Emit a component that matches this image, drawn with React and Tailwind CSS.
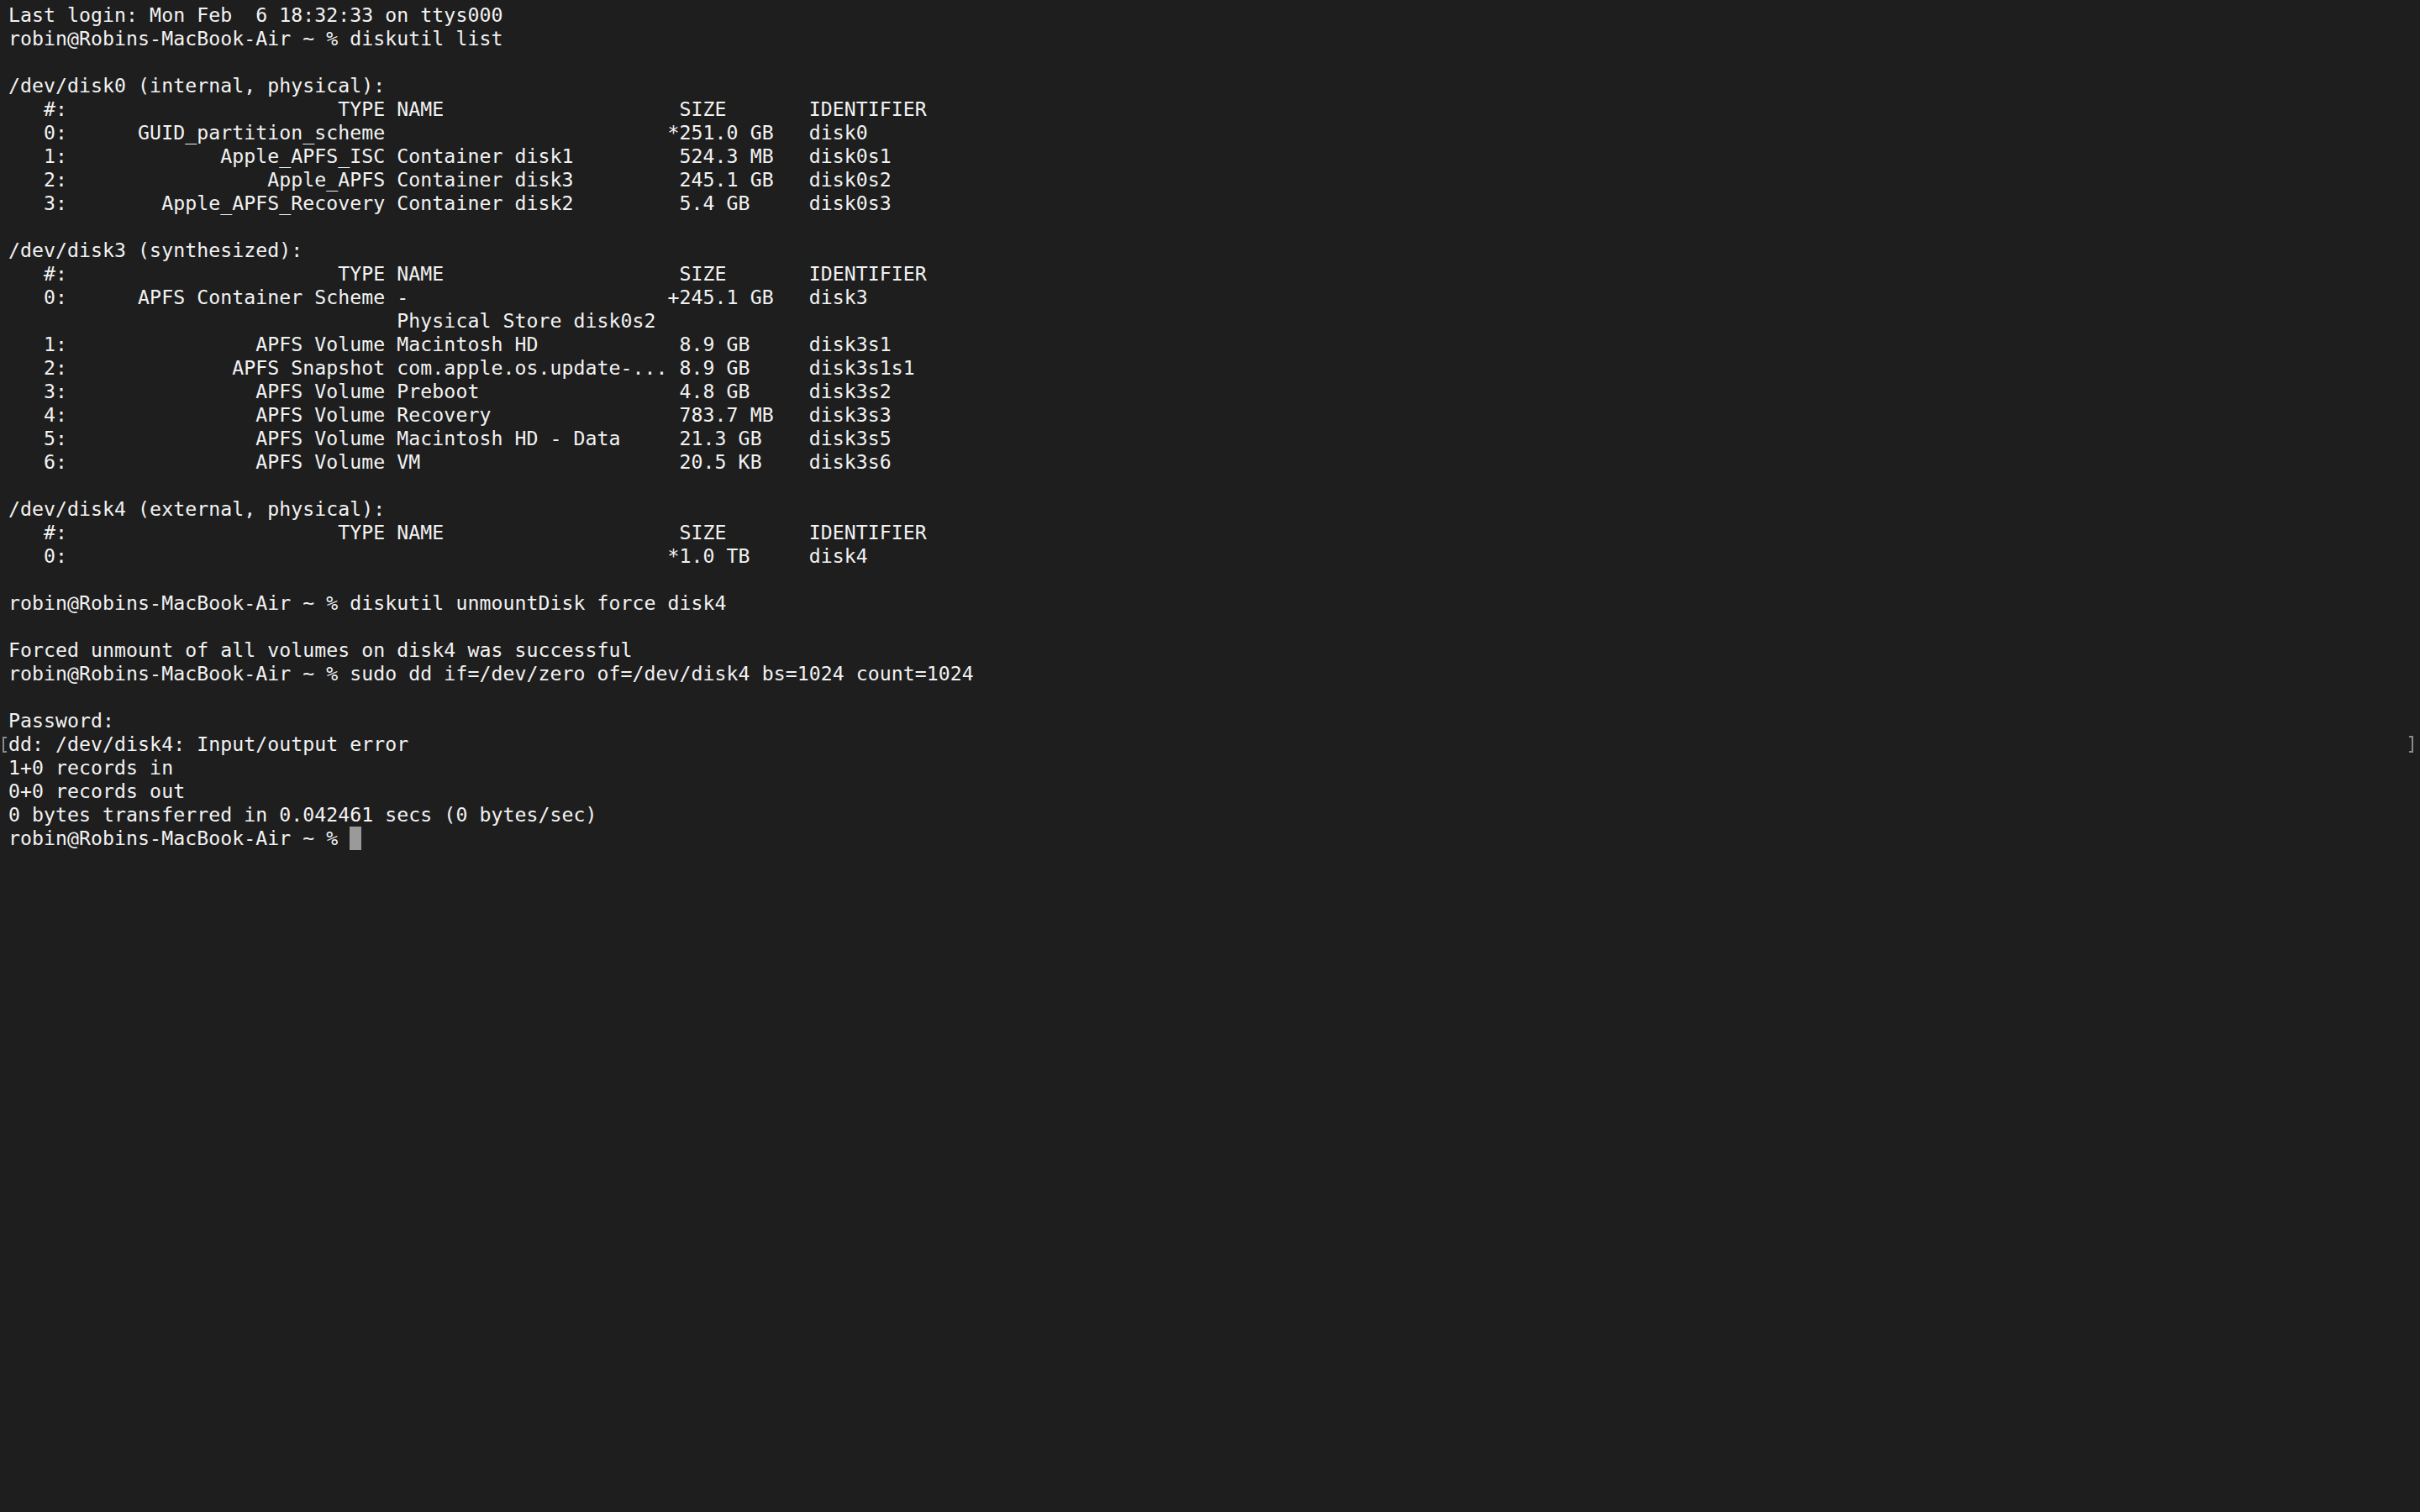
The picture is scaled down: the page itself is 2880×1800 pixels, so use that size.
import React from "react";

// diskutil table row: type right-aligned to col 32, size column starts at 56 (with * / + prefix)
function row(n, type, name, size, id, prefix = " ") {
  return (`   ${n}:` + type.padStart(27) + " " + name.padEnd(23) + prefix + size.padEnd(10) + " " + id).trimEnd();
}

const header = row("#", "TYPE", "NAME", "SIZE", "IDENTIFIER");
const prompt = "robin@Robins-MacBook-Air ~ % ";

const lines = [
  "Last login: Mon Feb  6 18:32:33 on ttys000",
  prompt + "diskutil list",
  "",
  "/dev/disk0 (internal, physical):",
  header,
  row("0", "GUID_partition_scheme", "", "251.0 GB", "disk0", "*"),
  row("1", "Apple_APFS_ISC", "Container disk1", "524.3 MB", "disk0s1"),
  row("2", "Apple_APFS", "Container disk3", "245.1 GB", "disk0s2"),
  row("3", "Apple_APFS_Recovery", "Container disk2", "5.4 GB", "disk0s3"),
  "",
  "/dev/disk3 (synthesized):",
  header,
  row("0", "APFS Container Scheme", "-", "245.1 GB", "disk3", "+"),
  " ".repeat(33) + "Physical Store disk0s2",
  row("1", "APFS Volume", "Macintosh HD", "8.9 GB", "disk3s1"),
  row("2", "APFS Snapshot", "com.apple.os.update-...", "8.9 GB", "disk3s1s1"),
  row("3", "APFS Volume", "Preboot", "4.8 GB", "disk3s2"),
  row("4", "APFS Volume", "Recovery", "783.7 MB", "disk3s3"),
  row("5", "APFS Volume", "Macintosh HD - Data", "21.3 GB", "disk3s5"),
  row("6", "APFS Volume", "VM", "20.5 KB", "disk3s6"),
  "",
  "/dev/disk4 (external, physical):",
  header,
  row("0", "", "", "1.0 TB", "disk4", "*"),
  "",
  prompt + "diskutil unmountDisk force disk4",
  "",
  "Forced unmount of all volumes on disk4 was successful",
  prompt + "sudo dd if=/dev/zero of=/dev/disk4 bs=1024 count=1024",
  "",
  "Password:",
  "dd: /dev/disk4: Input/output error",
  "1+0 records in",
  "0+0 records out",
  "0 bytes transferred in 0.042461 secs (0 bytes/sec)",
];

function Line({ text, marked }) {
  return (
    <div className="relative h-[28px] whitespace-pre px-[10px]">
      {marked && (
        <>
          <span className="absolute left-[3px] top-[5px] h-[19px] w-[5px] border-y-2 border-l-2 border-[#8a8a8a]" />
          <span className="absolute right-[8px] top-[4px] h-[20px] w-[5px] border-y-2 border-r-2 border-[#8a8a8a]" />
        </>
      )}
      {text}
    </div>
  );
}

export default function App() {
  return (
    <div className="h-screen w-full overflow-hidden bg-[#1e1e1e] pt-[4px] text-[#f2f2f2] font-['DejaVu_Sans_Mono','Liberation_Mono',monospace] text-[23.2px] leading-[28px] tracking-[0.05px]">
      {lines.map((t, i) => (
        <Line key={i} text={t} marked={t.startsWith("dd:")} />
      ))}
      {/* prompt with block cursor */}
      <div className="flex h-[28px] whitespace-pre px-[10px]">
        <span>{prompt}</span>
        <span className="inline-block h-[28px] w-[14px] bg-[#9a9a9a]" />
      </div>
    </div>
  );
}
